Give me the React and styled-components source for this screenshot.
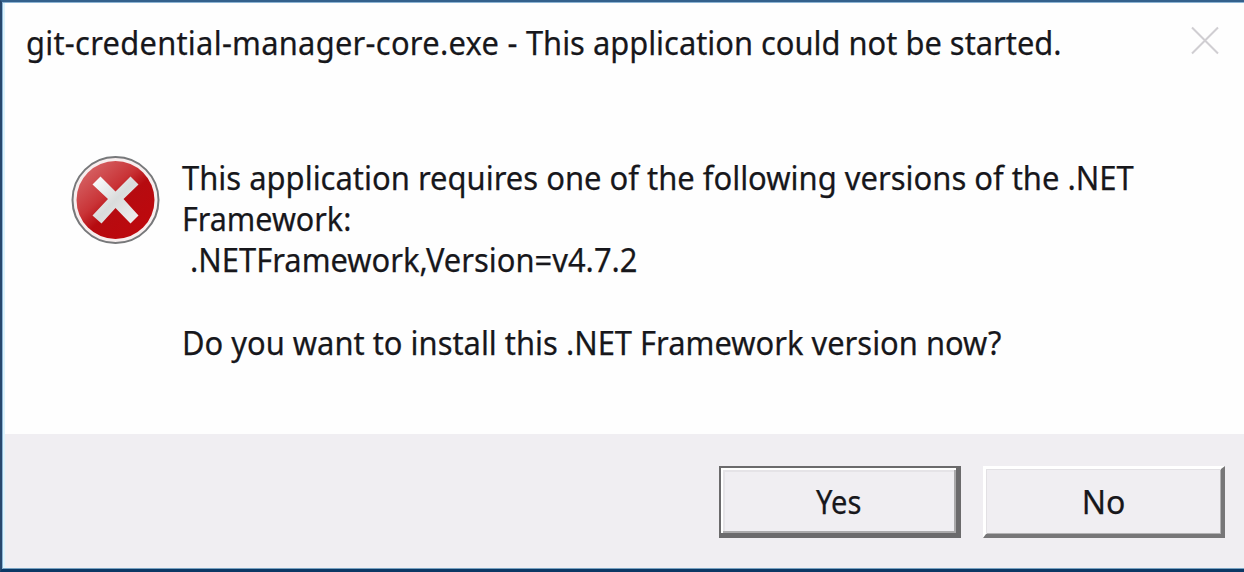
import React from "react";
import styled, { createGlobalStyle } from "styled-components";

const GlobalStyle = createGlobalStyle`
  * { box-sizing: border-box; }
  body { margin: 0; background: #fefefe; overflow: hidden; }
`;

const Dialog = styled.main`
  width: 1244px;
  height: 572px;
  display: flex;
  flex-direction: column;
  background: #fefefe;
  border-style: solid;
  border-width: 2px 0 3px 2px;
  border-color: #34618c #34618c #0b3865 #27486e;
  box-shadow: inset 1px 1px 0 #8db4d4, inset 0 -1px 0 #78a2c2, inset 3px 0 0 #ddf4fd;
  color: #17171b;
  font-family: "Noto Sans", "Open Sans", sans-serif;
  font-size: 33px;
  line-height: 41px;
  -webkit-text-stroke: 0.25px #17171b;
`;

const TitleBar = styled.header`
  display: flex;
  justify-content: space-between;
  height: 82px;
  padding: 20px 24px 0 24px;
`;

const Line = styled.span`
  display: block;
  width: max-content;
  height: 41.25px;
  white-space: pre;
  transform: scaleX(${(p) => p.$stretch || 1});
  transform-origin: left;
`;

const FileName = styled.span`
  letter-spacing: 0.285px;
`;

const CloseButton = styled.button`
  width: 30px;
  height: 30px;
  margin-top: 4px;
  padding: 0;
  border: 0;
  background: none;
  svg { display: block; }
`;

const Content = styled.section`
  display: flex;
  height: 350px;
  padding: 72px 0 0 69px;
  gap: 21px;
`;

const ErrorIcon = styled.svg`
  flex: none;
  width: 90px;
  height: 90px;
`;

const Message = styled.div`
  display: flex;
  flex-direction: column;
  padding-top: 0.5px;
`;

const Footer = styled.footer`
  display: flex;
  flex: 1;
  justify-content: flex-end;
  gap: 22px;
  margin: 0 0 1px 3px;
  padding: 32px 19px 0 0;
  background: #f0eef2;
`;

const Button = styled.button`
  display: flex;
  justify-content: center;
  width: 242px;
  height: 72px;
  padding: ${(p) => (p.$primary ? "13px 0 0" : "12px 0 0")};
  border-style: solid;
  border-width: ${(p) => (p.$primary ? "2px 5px 5px 2px" : "3px 4px 4px 3px")};
  border-color: ${(p) => (p.$primary ? "#6b6a6c" : "#fff #777678 #777678 #fff")};
  background: #f0eef2;
  box-shadow: ${(p) =>
    p.$primary
      ? "inset 2px 2px 0 #fff, inset -2px -2px 0 #aaa9ab, inset 4px 4px 0 #e5e3e7"
      : "inset 1px 1px 0 #e2e0e4, inset -1px -1px 0 #b2b1b3"};
  color: inherit;
  font: inherit;
`;

const ButtonText = styled(Line)`
  transform-origin: center;
`;

export default function App() {
  return (
    <>
      <GlobalStyle />
      <Dialog>
        <TitleBar>
          <Line $stretch={0.935}>
            <FileName>git-credential-manager-core.exe - </FileName>
            This application could not be started.
          </Line>
          <CloseButton aria-label="Close">
            <svg width="30" height="30" viewBox="0 0 30 30">
              <path d="M2 1.5 28 27.5M28 1.5 2 27.5" stroke="#d0ced2" strokeWidth="2" fill="none" />
            </svg>
          </CloseButton>
        </TitleBar>
        <Content>
          <ErrorIcon viewBox="0.5 0.5 90 90">
            <defs>
              <linearGradient id="ball" x1="0.1" y1="0.1" x2="0.8" y2="0.9">
                <stop offset="0" stopColor="#d66466" />
                <stop offset="0.4" stopColor="#c93437" />
                <stop offset="0.6" stopColor="#b60b10" />
                <stop offset="1" stopColor="#bd080d" />
              </linearGradient>
              <linearGradient id="cross" x1="0" y1="0" x2="1" y2="1">
                <stop offset="0" stopColor="#fff" />
                <stop offset="0.5" stopColor="#d9dcdc" />
                <stop offset="1" stopColor="#f2efef" />
              </linearGradient>
            </defs>
            <circle cx="45" cy="44.5" r="43" fill="#f7eeee" stroke="#77787a" strokeWidth="2" />
            <circle cx="45" cy="44.5" r="39" fill="url(#ball)" />
            <path d="M30 21 45 36 60 21 68 29 53 43.5 68 60 60 68 45 52.5 31 68 22 60 37.500 43.5 22 29Z" fill="url(#cross)" />
          </ErrorIcon>
          <Message>
            <Line $stretch={0.938}>This application requires one of the following versions of the .NET</Line>
            <Line $stretch={0.923}>Framework:</Line>
            <Line $stretch={0.936}> .NETFramework,Version=v4.7.2</Line>
            <Line> </Line>
            <Line $stretch={0.936}>Do you want to install this .NET Framework version now?</Line>
          </Message>
        </Content>
        <Footer>
          <Button $primary><ButtonText $stretch={0.88}>Yes</ButtonText></Button>
          <Button><ButtonText $stretch={0.97}>No</ButtonText></Button>
        </Footer>
      </Dialog>
    </>
  );
}
